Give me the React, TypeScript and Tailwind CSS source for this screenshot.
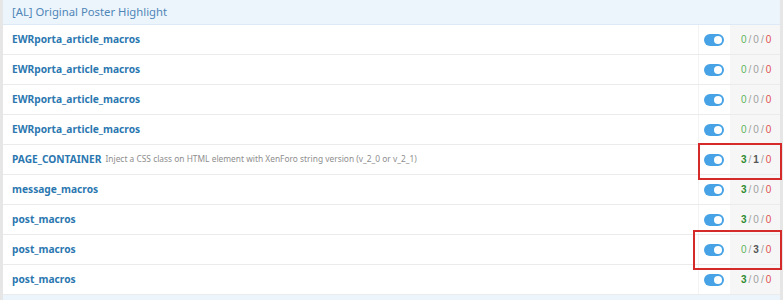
import React from 'react';

type Row = {
  name: string;
  desc?: string;
  counts: [number, number, number];
};

const ROWS: Row[] = [
  { name: 'EWRporta_article_macros', counts: [0, 0, 0] },
  { name: 'EWRporta_article_macros', counts: [0, 0, 0] },
  { name: 'EWRporta_article_macros', counts: [0, 0, 0] },
  { name: 'EWRporta_article_macros', counts: [0, 0, 0] },
  {
    name: 'PAGE_CONTAINER',
    desc: 'Inject a CSS class on HTML element with XenForo string version (v_2_0 or v_2_1)',
    counts: [3, 1, 0],
  },
  { name: 'message_macros', counts: [3, 0, 0] },
  { name: 'post_macros', counts: [3, 0, 0] },
  { name: 'post_macros', counts: [0, 3, 0] },
  { name: 'post_macros', counts: [3, 0, 0] },
];

const Toggle: React.FC = () => (
  <span className="relative inline-block w-[20px] h-[12px] rounded-full bg-[#47a3e6]">
    <span className="absolute right-[2px] top-[2px] w-[8px] h-[8px] rounded-full bg-white" />
  </span>
);

const Counts: React.FC<{ counts: [number, number, number] }> = ({ counts }) => {
  const [a, b, c] = counts;
  return (
    <span className="text-[10px] font-['Liberation_Sans',sans-serif]">
      <span className={a > 0 ? 'text-[#2f8a2f] font-bold' : 'text-[#5db55d]'}>{a}</span>
      <span className="text-[#a0a0a0] mx-[2px]">/</span>
      <span className={b > 0 ? 'text-[#555] font-bold' : 'text-[#a0a0a0]'}>{b}</span>
      <span className="text-[#a0a0a0] mx-[2px]">/</span>
      <span className="text-[#e05050]">{c}</span>
    </span>
  );
};

export default function App() {
  return (
    <div className="w-[783px] h-[300px] overflow-hidden bg-white font-['Noto_Sans',sans-serif]">
      <div className="border-l-[3px] border-r-[3px] border-[#e6e6e6] h-full flex flex-col">
        {/* Block header */}
        <div className="h-[25px] shrink-0 bg-[#edf5fc] border-b border-[#dde9f5] flex items-center pl-[9px]">
          <h2 className="text-[11.3px] text-[#4f86b8] leading-none">[AL] Original Poster Highlight</h2>
        </div>

        {ROWS.map((row, i) => (
          <div key={i} className="h-[30px] shrink-0 flex border-b border-[#ebebeb]">
            <div className="flex-1 flex items-center pl-[9px] gap-[4px] min-w-0">
              <span className="text-[10.2px] font-bold text-[#2b77b0] whitespace-nowrap">{row.name}</span>
              {row.desc && (
                <span className="text-[8.4px] text-[#8e8e8e] whitespace-nowrap">{row.desc}</span>
              )}
            </div>
            <div className="w-[32px] flex items-center pl-[5px] border-l border-[#f3f3f3]">
              <Toggle />
            </div>
            <div className="w-[50px] bg-[#f6f6f6] flex items-center pl-[11px]">
              <Counts counts={row.counts} />
            </div>
          </div>
        ))}

        <div className="flex-1 bg-[#edf5fc]" />
      </div>

      {/* Red annotation boxes */}
      <div className="pointer-events-none">
        <div className="absolute left-[698px] top-[143px] w-[84px] h-[37px] border-2 border-[#d42a2a]" />
        <div className="absolute left-[693px] top-[230px] w-[89px] h-[40px] border-2 border-[#d42a2a]" />
      </div>
    </div>
  );
}
